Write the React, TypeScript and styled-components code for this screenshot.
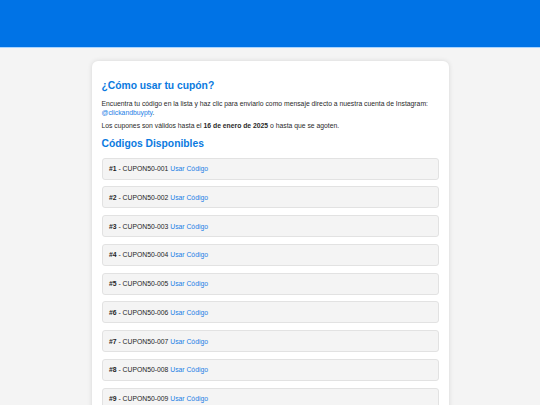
import React from 'react';
import styled, { createGlobalStyle } from 'styled-components';

const GlobalStyle = createGlobalStyle`
  html, body {
    margin: 0;
    padding: 0;
    background: #f4f4f4;
    font-family: "Liberation Sans", Arial, sans-serif;
    color: #222222;
  }
`;

const Header = styled.header`
  height: 47px;
  background: #0073e6;
  border-bottom: 1px solid #a9d4ff;
`;

const Card = styled.main`
  width: 357px;
  box-sizing: border-box;
  margin: 13px auto 0;
  padding: 18px 10px 10px;
  background: #ffffff;
  border-radius: 6px;
  box-shadow: 0 0 5px rgba(0, 0, 0, 0.12);
`;

const Title = styled.h2<{ $top?: number; $bottom?: number }>`
  margin: ${(p) => p.$top ?? 0}px 0 ${(p) => p.$bottom ?? 7}px;
  font-size: 10.3px;
  line-height: 14px;
  font-weight: 700;
  color: #0a7ae0;
`;

const Paragraph = styled.p`
  margin: 0 0 5px;
  font-size: 6.8px;
  line-height: 8.5px;
  color: #2a2a2a;
`;

const Link = styled.a`
  color: #1a7ee6;
  text-decoration: none;
`;

const CodeList = styled.div`
  display: flex;
  flex-direction: column;
  gap: 6.75px;
  margin-top: 7px;
`;

const CodeRow = styled.div`
  height: 22px;
  box-sizing: border-box;
  display: flex;
  align-items: center;
  padding: 0 6.5px;
  background: #f4f4f4;
  border: 1px solid #e2e2e2;
  border-radius: 3px;
  font-size: 6.8px;
  color: #1e1e1e;
  white-space: pre;
`;

const codes = Array.from({ length: 10 }, (_, i) => ({
  n: i + 1,
  code: `CUPON50-${String(i + 1).padStart(3, '0')}`,
}));

export default function App() {
  return (
    <>
      <GlobalStyle />
      <Header />
      <Card>
        <Title>¿Cómo usar tu cupón?</Title>
        <Paragraph>
          Encuentra tu código en la lista y haz clic para enviarlo como mensaje directo a nuestra cuenta de Instagram:{' '}
          <Link href="#">@clickandbuypty</Link>.
        </Paragraph>
        <Paragraph>
          Los cupones son válidos hasta el <b>16 de enero de 2025</b> o hasta que se agoten.
        </Paragraph>
        <Title $top={6} $bottom={0}>
          Códigos Disponibles
        </Title>
        <CodeList>
          {codes.map((c) => (
            <CodeRow key={c.n}>
              <b>#{c.n}</b> - {c.code} <Link href="#">Usar Código</Link>
            </CodeRow>
          ))}
        </CodeList>
      </Card>
    </>
  );
}
